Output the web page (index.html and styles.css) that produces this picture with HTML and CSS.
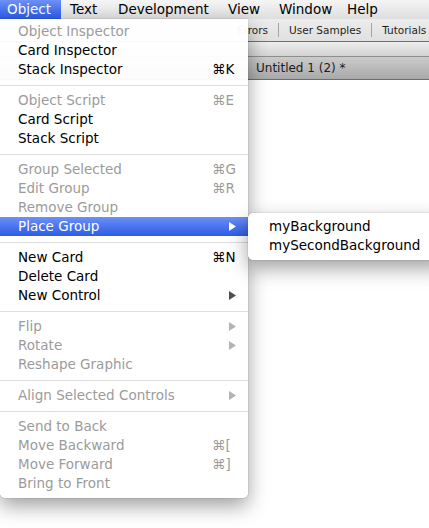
FILE: index.html
```html
<!DOCTYPE html>
<html>
<head>
<meta charset="utf-8">
<link rel="stylesheet" href="styles.css">
</head>
<body>
<div class="menubar">
  <span class="mb-item mb-object active">Object</span>
  <span class="mb-item mb-text">Text</span>
  <span class="mb-item mb-dev">Development</span>
  <span class="mb-item mb-view">View</span>
  <span class="mb-item mb-window">Window</span>
  <span class="mb-item">Help</span>
</div>
<div class="toolbar">
  <span class="tb-sep"></span>
  <span class="tb-item">Errors</span><span class="tb-sep"></span>
  <span class="tb-item">User Samples</span><span class="tb-sep"></span>
  <span class="tb-item">Tutorials</span>
</div>
<div class="window">
  <div class="win-strip"></div>
  <div class="win-title">Untitled 1 (2) *</div>
  <div class="win-body"></div>
</div>

<div class="menu">
  <div class="mi dis"><span class="lbl">Object Inspector</span><span class="key"></span></div>
  <div class="mi"><span class="lbl">Card Inspector</span><span class="key"></span></div>
  <div class="mi"><span class="lbl">Stack Inspector</span><span class="key">⌘K</span></div>
  <div class="sep"></div>
  <div class="mi dis"><span class="lbl">Object Script</span><span class="key">⌘E</span></div>
  <div class="mi"><span class="lbl">Card Script</span><span class="key"></span></div>
  <div class="mi"><span class="lbl">Stack Script</span><span class="key"></span></div>
  <div class="sep"></div>
  <div class="mi dis"><span class="lbl">Group Selected</span><span class="key">⌘G</span></div>
  <div class="mi dis"><span class="lbl">Edit Group</span><span class="key">⌘R</span></div>
  <div class="mi dis"><span class="lbl">Remove Group</span><span class="key"></span></div>
  <div class="mi hl"><span class="lbl">Place Group</span><span class="key"><svg class="arr" width="7" height="9" viewBox="0 0 7 9"><path d="M0 0L7 4.5L0 9Z" fill="currentColor"/></svg></span></div>
  <div class="sep"></div>
  <div class="mi"><span class="lbl">New Card</span><span class="key">⌘N</span></div>
  <div class="mi"><span class="lbl">Delete Card</span><span class="key"></span></div>
  <div class="mi"><span class="lbl">New Control</span><span class="key"><svg class="arr" width="7" height="9" viewBox="0 0 7 9"><path d="M0 0L7 4.5L0 9Z" fill="currentColor"/></svg></span></div>
  <div class="sep"></div>
  <div class="mi dis"><span class="lbl">Flip</span><span class="key"><svg class="arr" width="7" height="9" viewBox="0 0 7 9"><path d="M0 0L7 4.5L0 9Z" fill="currentColor"/></svg></span></div>
  <div class="mi dis"><span class="lbl">Rotate</span><span class="key"><svg class="arr" width="7" height="9" viewBox="0 0 7 9"><path d="M0 0L7 4.5L0 9Z" fill="currentColor"/></svg></span></div>
  <div class="mi dis"><span class="lbl">Reshape Graphic</span><span class="key"></span></div>
  <div class="sep"></div>
  <div class="mi dis"><span class="lbl">Align Selected Controls</span><span class="key"><svg class="arr" width="7" height="9" viewBox="0 0 7 9"><path d="M0 0L7 4.5L0 9Z" fill="currentColor"/></svg></span></div>
  <div class="sep"></div>
  <div class="mi dis"><span class="lbl">Send to Back</span><span class="key"></span></div>
  <div class="mi dis"><span class="lbl">Move Backward</span><span class="key">⌘[</span></div>
  <div class="mi dis"><span class="lbl">Move Forward</span><span class="key">⌘]</span></div>
  <div class="mi dis"><span class="lbl">Bring to Front</span><span class="key"></span></div>
</div>

<div class="submenu">
  <div class="si">myBackground</div>
  <div class="si">mySecondBackground</div>
</div>
</body>
</html>
```

FILE: styles.css
```css
html, body {
  margin: 0;
  padding: 0;
  height: 100%;
  overflow: hidden;
  background: #ffffff;
  font-family: "DejaVu Sans", "Noto Sans", sans-serif;
}
body {
  position: relative;
}

/* ---------- menu bar ---------- */
.menubar {
  display: flex;
  height: 19px;
  background: linear-gradient(#f5f5f5, #dedede);
}
.mb-item {
  box-sizing: border-box;
  height: 19px;
  line-height: 19px;
  font-size: 13.5px;
  color: #000;
  padding-left: 9px;
  white-space: nowrap;
}
.mb-object { width: 61px; padding-left: 7px; }
.mb-text { width: 48px; }
.mb-dev { width: 110px; }
.mb-view { width: 51px; }
.mb-window { width: 68px; }
.mb-item.active {
  color: #fff;
  background: linear-gradient(#6e90f6 0%, #4a74ee 50%, #2c5ce8 100%);
}

/* ---------- toolbar ---------- */
.toolbar {
  display: flex;
  align-items: center;
  height: 22px;
  padding-left: 226px;
  background: linear-gradient(#ececec, #e0e0e0);
  border-bottom: 1px solid #6f6f6f;
  white-space: nowrap;
}
.tb-item {
  padding: 0 10px;
  font-size: 10.5px;
  color: #1e1e1e;
}
.tb-sep {
  width: 1px;
  height: 14px;
  background: #a4a4a4;
  flex: none;
}

/* ---------- document window ---------- */
.win-strip {
  height: 14px;
  background: linear-gradient(#eeeeee, #d2d2d2);
  border-bottom: 1px solid #8e8e8e;
}
.win-title {
  height: 22px;
  line-height: 22px;
  padding-left: 256px;
  font-size: 12px;
  color: #1c1c1c;
  background: linear-gradient(#cbcbcb, #a9a9a9);
  border-bottom: 1px solid #6c6c6c;
}
.win-body {
  height: 460px;
  background: #fff;
}

/* ---------- dropdown menu ---------- */
.menu {
  position: absolute;
  top: 19px;
  left: 0;
  width: 248px;
  box-sizing: border-box;
  padding: 3px 0 5px;
  background: rgba(255, 255, 255, 0.96);
  border-radius: 0 0 5px 5px;
  box-shadow: 0 8px 20px rgba(0, 0, 0, 0.38), 0 0 1px rgba(0, 0, 0, 0.55);
  z-index: 2;
}
.mi {
  display: flex;
  align-items: center;
  height: 19px;
  line-height: 19px;
  padding: 0 12px 0 18px;
  font-size: 13.5px;
  color: #000;
  white-space: nowrap;
}
.mi .lbl { flex: 1; }
.mi .key {
  width: 24px;
  display: flex;
  align-items: center;
  color: #000;
}
.mi .arr { margin-left: auto; color: #505050; }
.mi.dis, .mi.dis .key { color: #9b9b9b; }
.mi.dis .arr { color: #b4b4b4; }
.mi.hl {
  color: #fff;
  background: linear-gradient(#6e90f6 0%, #4b75ee 50%, #2c5ce8 100%);
}
.mi.hl .key, .mi.hl .arr { color: #fff; }
.sep {
  height: 1px;
  margin: 6px 0 5px;
  background: #dedede;
}

/* ---------- submenu ---------- */
.submenu {
  position: absolute;
  top: 213px;
  left: 248px;
  width: 200px;
  padding: 4px 0 5px;
  background: rgba(255, 255, 255, 0.96);
  border-radius: 5px;
  box-shadow: 0 8px 20px rgba(0, 0, 0, 0.38), 0 0 1px rgba(0, 0, 0, 0.55);
  z-index: 3;
}
.si {
  height: 19px;
  line-height: 19px;
  padding-left: 21px;
  font-size: 13.5px;
  color: #000;
  white-space: nowrap;
}
```
